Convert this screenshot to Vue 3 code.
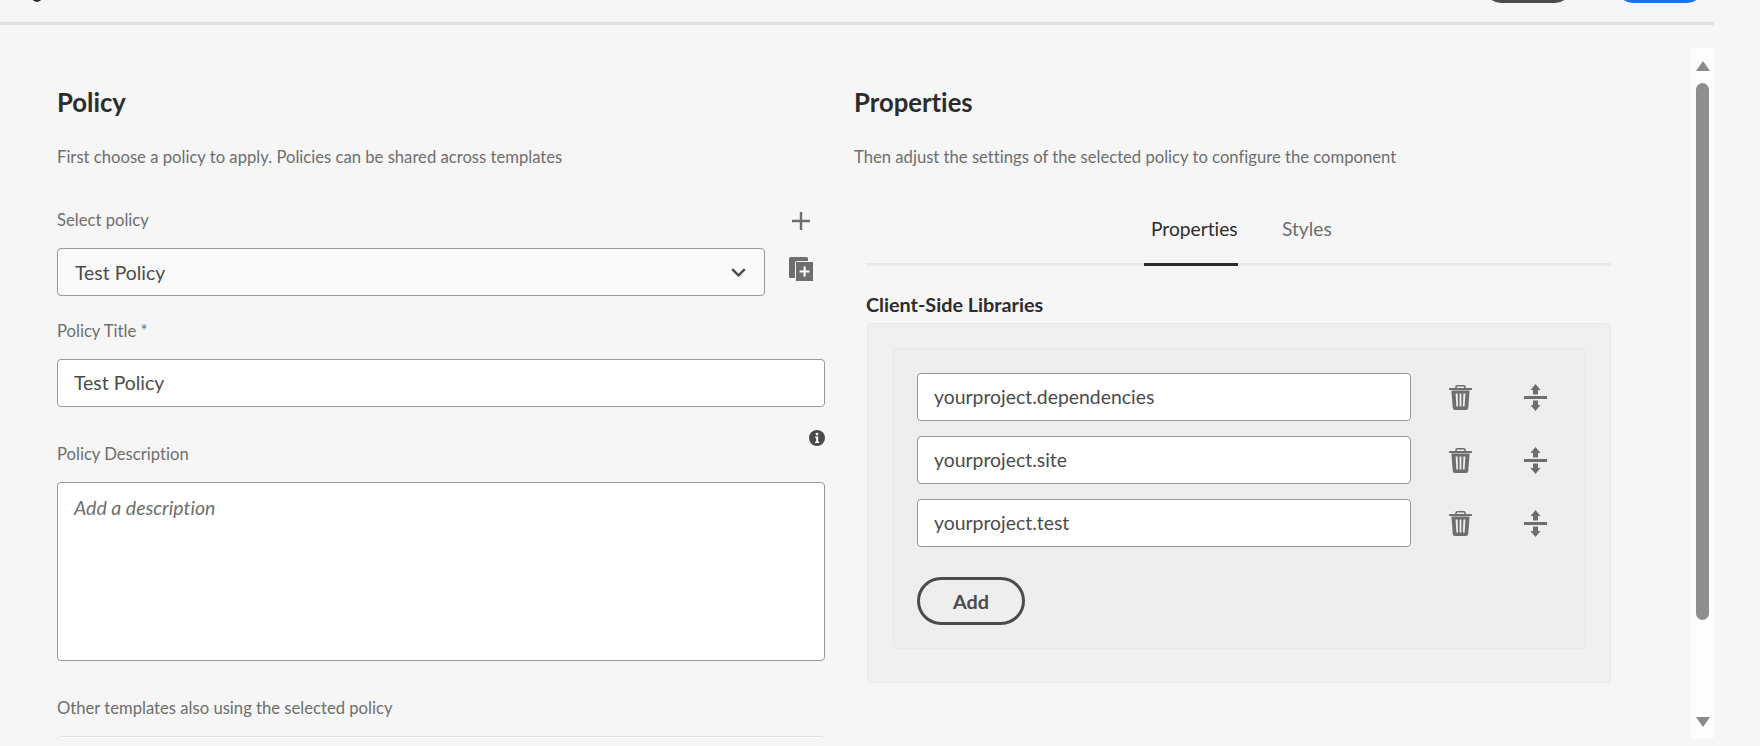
<script setup>
const libraries = ['yourproject.dependencies', 'yourproject.site', 'yourproject.test']
</script>

<template>
  <div class="page">
    <header class="topbar">
      <span class="topbar-mark"></span>
      <span class="topbar-btn cancel"></span>
      <span class="topbar-btn done"></span>
    </header>

    <div class="scroller">
      <main class="columns">
        <section class="col-left">
          <h2 class="title">Policy</h2>
          <p class="hint">First choose a policy to apply. Policies can be shared across templates</p>

          <div class="policy-grid">
            <label class="label">Select policy</label>
            <svg class="icon-plus" viewBox="0 0 18 18" aria-hidden="true">
              <path d="M7.800 0h2.400v7.800H18v2.400h-7.800V18H7.800v-7.800H0V7.800h7.800z" />
            </svg>
            <div class="select">
              <span>Test Policy</span>
              <svg class="chevron" viewBox="0 0 15 9" aria-hidden="true">
                <path d="M1.200 1.200 7.500 7.400l6.300-6.200" />
              </svg>
            </div>
            <svg class="icon-copy" viewBox="0 0 25 25" aria-hidden="true">
              <rect class="copy-back" x="0" y="0" width="19" height="21" rx="1.500" />
              <rect class="copy-front" x="6.500" y="4.500" width="18" height="20" rx="1" />
              <path class="copy-plus" d="M14.500 9.500h2.200v3.900h3.800v2.200h-3.800v3.900h-2.200v-3.900h-3.900v-2.200h3.900z" />
            </svg>
          </div>

          <label class="label title-label">Policy Title *</label>
          <div class="field">Test Policy</div>

          <div class="desc-head">
            <label class="label">Policy Description</label>
            <svg class="icon-info" viewBox="0 0 16 16" aria-hidden="true">
              <circle cx="8" cy="8" r="8" />
              <circle class="info-i" cx="8" cy="4.100" r="1.400" />
              <path class="info-i" d="M6.200 6.600h3v5.100h1v1.400H6v-1.400h1.100V8H6.200z" />
            </svg>
          </div>
          <div class="textarea">Add a description</div>

          <label class="label other-label">Other templates also using the selected policy</label>
          <div class="template-list"></div>
        </section>

        <section class="col-right">
          <h2 class="title">Properties</h2>
          <p class="hint">Then adjust the settings of the selected policy to configure the component</p>

          <div class="tabs">
            <span class="tab active">Properties</span>
            <span class="tab">Styles</span>
          </div>

          <h3 class="group-title">Client-Side Libraries</h3>
          <div class="outer-panel">
            <div class="inner-panel">
              <div v-for="lib in libraries" :key="lib" class="lib-row">
                <div class="field lib-field">{{ lib }}</div>
                <span class="lib-action trash-slot">
                  <svg class="icon-trash" viewBox="0 0 23 25" aria-hidden="true">
                    <path class="trash-handle" d="M7 3.500V2Q7 .8 8.200 .8h6.600Q16 .8 16 2v1.500" />
                    <rect x="0" y="3" width="23" height="2" rx=".6" />
                    <path fill-rule="evenodd" d="M2.400 5.600h18.200l-1.300 17.200q-.2 2.200-2.300 2.200H6q-2.100 0-2.300-2.200zM6.600 8.400l.8 13.200h1.700L8.600 8.400zM10.600 8.400v13.200h1.800V8.400zM14.400 8.400l-.5 13.200h1.700l.8-13.200z" />
                  </svg>
                </span>
                <span class="lib-action move-slot">
                  <svg class="icon-move" viewBox="0 0 23 27" aria-hidden="true">
                    <path d="M11.500 0l5 6H14v4.500H9V6H6.500z" />
                    <rect x="0" y="12" width="23" height="3" />
                    <path d="M9 16.500h5V21h2.500l-5 6-5-6H9z" />
                  </svg>
                </span>
              </div>
              <button class="add-btn" type="button">Add</button>
            </div>
          </div>
        </section>
      </main>

      <aside class="scrollbar" aria-hidden="true">
        <svg class="arrow" viewBox="0 0 14 10"><path d="M7 0l7 10H0z" /></svg>
        <div class="thumb"></div>
        <svg class="arrow arrow-down" viewBox="0 0 14 10"><path d="M0 0h14L7 10z" /></svg>
      </aside>
    </div>
  </div>
</template>

<style scoped>
.page {
  width: 1760px;
  height: 746px;
  overflow: hidden;
  background: #f6f6f6;
  font-family: Lato, "Open Sans", sans-serif;
  font-variant-ligatures: none;
  color: #6e6e6e;
}

.topbar {
  box-sizing: border-box;
  width: 1714px;
  height: 25px;
  display: flex;
  align-items: flex-end;
  padding: 0 11px 19px 32px;
  border-bottom: 3px solid #e1e1e1;
  overflow: hidden;
}

.topbar-mark {
  width: 10px;
  height: 10px;
  margin-bottom: 1px;
  border-radius: 50%;
  background: #2c2c2c;
}

.topbar-btn {
  flex: none;
  width: 86px;
  height: 32px;
  border-radius: 16px;
}

.cancel {
  margin-left: auto;
  background: #4b4b4b;
}

.done {
  margin-left: 46px;
  background: #1473e6;
}

.scroller {
  width: 1714px;
  height: 690px;
  margin-top: 23px;
  display: flex;
  overflow: hidden;
}

.columns {
  display: flex;
  flex: none;
  width: 1691px;
  box-sizing: border-box;
  padding: 39px 0 0 57px;
  gap: 29px;
}

.col-left {
  flex: none;
  width: 768px;
}

.col-right {
  flex: none;
  width: 757px;
}

.title {
  margin: 0;
  font-size: 25.7px;
  font-weight: 700;
  line-height: 30px;
  color: #2c2c2c;
}

.hint {
  margin: 28px 0 0;
  font-size: 16.65px;
  line-height: 24px;
  color: #6e6e6e;
}

.label {
  display: block;
  font-size: 16.65px;
  line-height: 24px;
  color: #6e6e6e;
}

.policy-grid {
  display: grid;
  grid-template-columns: 708px 1fr;
  grid-template-rows: 24px 48px;
  row-gap: 16px;
  margin-top: 39px;
}

.icon-plus {
  justify-self: end;
  width: 18px;
  height: 18px;
  margin: 4px 15px 0 0;
  fill: #6e6e6e;
}

.select {
  box-sizing: border-box;
  display: flex;
  align-items: center;
  justify-content: space-between;
  height: 48px;
  padding: 0 18px 0 17px;
  border: 1px solid #999;
  border-radius: 4px;
  background: #fafafa;
  font-size: 19.4px;
  color: #4b4b4b;
}

.chevron {
  width: 15px;
  height: 9px;
  fill: none;
  stroke: #4b4b4b;
  stroke-width: 2.4;
}

.icon-copy {
  justify-self: end;
  width: 25px;
  height: 25px;
  margin: 9px 11px 0 0;
}

.copy-back {
  fill: #6e6e6e;
}

.copy-front {
  fill: #6e6e6e;
  stroke: #f6f6f6;
  stroke-width: 1;
}

.copy-plus {
  fill: #fff;
}

.title-label {
  margin-top: 23px;
}

.field {
  box-sizing: border-box;
  height: 48px;
  margin-top: 16px;
  padding: 0 16px;
  border: 1px solid #999;
  border-radius: 4px;
  background: #fff;
  font-size: 19.4px;
  line-height: 46px;
  color: #4b4b4b;
}

.desc-head {
  display: flex;
  justify-content: space-between;
  height: 36px;
  margin-top: 23px;
}

.desc-head .label {
  align-self: flex-end;
}

.icon-info {
  width: 16px;
  height: 16px;
  fill: #4b4b4b;
}

.info-i {
  fill: #fff;
}

.textarea {
  box-sizing: border-box;
  height: 179px;
  margin-top: 16px;
  padding: 13px 16px;
  border: 1px solid #999;
  border-radius: 4px;
  background: #fff;
  font-size: 19.5px;
  font-style: italic;
  line-height: 24px;
  color: #6e6e6e;
}

.other-label {
  margin-top: 35px;
}

.template-list {
  box-sizing: border-box;
  height: 60px;
  margin-top: 16px;
  border: 1px solid #e1e1e1;
  border-radius: 4px;
  background: #fff;
}

.tabs {
  display: flex;
  margin: 48px 0 0 12px;
  padding-left: 278px;
  border-bottom: 3px solid #e8e8e8;
}

.tab {
  box-sizing: border-box;
  margin-bottom: -3px;
  padding: 0 0 22px;
  border-bottom: 3px solid transparent;
  font-size: 19.2px;
  line-height: 24px;
  color: #6e6e6e;
}

.tab.active {
  width: 94px;
  margin-right: 44px;
  padding-left: 7px;
  border-bottom-color: #2c2c2c;
  color: #2c2c2c;
  white-space: nowrap;
}

.group-title {
  margin: 26px 0 0 12px;
  font-size: 19.8px;
  font-weight: 700;
  line-height: 24px;
  color: #2c2c2c;
}

.outer-panel {
  box-sizing: border-box;
  margin: 7px 0 0 13px;
  padding: 24px 24px 33px 25px;
  border: 1px solid #e8e8e8;
  border-radius: 4px;
  background: #f0f0f0;
}

.inner-panel {
  box-sizing: border-box;
  padding: 24px 24px 23px 23px;
  border: 1px solid #e8e8e8;
  border-radius: 4px;
  background: #eee;
}

.lib-row {
  display: flex;
  align-items: center;
  height: 48px;
  margin-bottom: 15px;
}

.lib-row .lib-field {
  flex: none;
  width: 494px;
  margin-top: 0;
}

.lib-action {
  display: flex;
  flex: none;
  justify-content: center;
}

.trash-slot {
  width: 23px;
  margin-left: 38px;
}

.move-slot {
  width: 23px;
  margin-left: 52px;
}

.icon-trash {
  width: 23px;
  height: 25px;
  fill: #6e6e6e;
}

.trash-handle {
  fill: none;
  stroke: #6e6e6e;
  stroke-width: 1.6;
}

.icon-move {
  width: 23px;
  height: 27px;
  fill: #6e6e6e;
}

.add-btn {
  box-sizing: border-box;
  display: block;
  width: 108px;
  height: 48px;
  margin-top: 30px;
  border: 3px solid #4b4b4b;
  border-radius: 24px;
  background: transparent;
  font-family: inherit;
  font-size: 19.8px;
  font-weight: 700;
  color: #4b4b4b;
}

.scrollbar {
  display: flex;
  flex: none;
  flex-direction: column;
  align-items: center;
  width: 23px;
  height: 690px;
  background: #fdfdfd;
}

.arrow {
  flex: none;
  width: 14px;
  height: 10px;
  margin-top: 13px;
  fill: #8a8a8a;
}

.arrow-down {
  margin-top: 97px;
}

.thumb {
  flex: none;
  width: 13px;
  height: 537px;
  margin-top: 12px;
  border-radius: 7px;
  background: #8e8e8e;
}
</style>
